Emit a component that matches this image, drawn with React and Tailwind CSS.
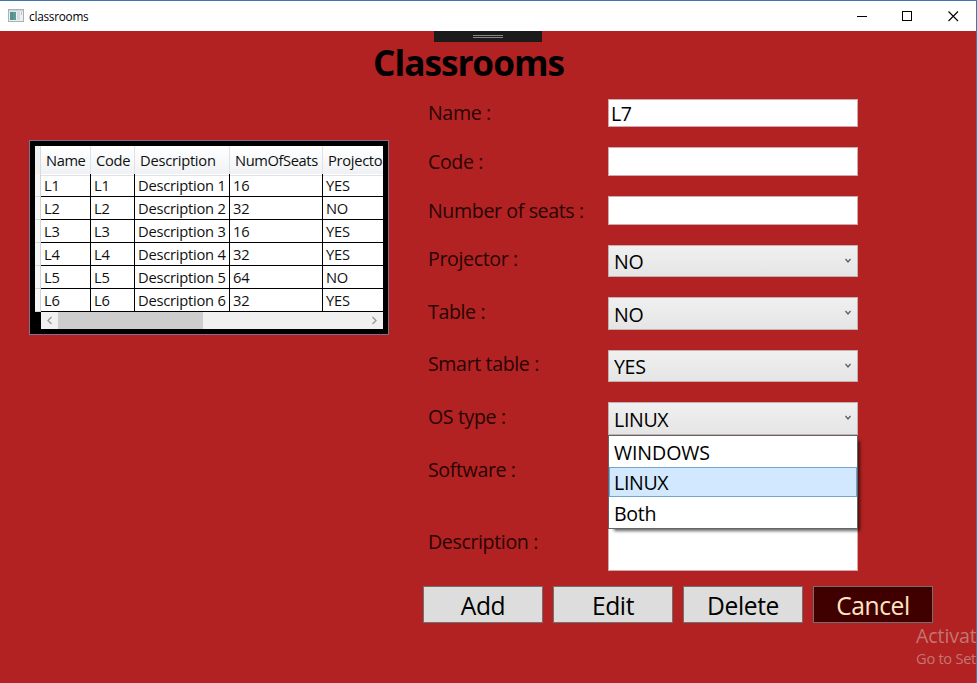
const rooms = [
  ["L1", "L1", "Description 1", "16", "YES"],
  ["L2", "L2", "Description 2", "32", "NO"],
  ["L3", "L3", "Description 3", "16", "YES"],
  ["L4", "L4", "Description 4", "32", "YES"],
  ["L5", "L5", "Description 5", "64", "NO"],
  ["L6", "L6", "Description 6", "32", "YES"],
];

const headers = [
  ["Name", "tracking-[-0.4px]"],
  ["Code", "tracking-[-0.3px]"],
  ["Description", "tracking-[-0.25px]"],
  ["NumOfSeats", "tracking-[-0.4px]"],
  ["Projector", "tracking-[-0.3px]"],
];

const columns = "grid grid-cols-[6px_50px_44px_95px_93px_90px]";

function TitleBar() {
  return (
    <header className="flex h-[31px] shrink-0 items-center border-t border-[#3f76b0] bg-white">
      <svg className="ml-2 h-[14px] w-[16px]" viewBox="0 0 16 14">
        <rect x="0.5" y="0.5" width="15" height="12" fill="#eef1f2" stroke="#a9b0b5" />
        <rect x="1" y="1" width="14" height="1.5" fill="#cfd5d9" />
        <rect x="2" y="3" width="6" height="8" fill="#5b9c93" />
        <rect x="2" y="3" width="3" height="8" fill="#4d8a92" opacity="0.6" />
        <rect x="9" y="3" width="3" height="8" fill="#d5dde0" />
        <rect x="13" y="3" width="1" height="3" fill="#b9c1c6" />
      </svg>
      <span className="ml-[5px] flex-1 pb-px text-[11.8px] leading-5 tracking-[-0.25px]">classrooms</span>
      <div className="mr-[17px] flex items-center gap-[35px]">
        <svg className="h-[11px] w-[11px]" viewBox="0 0 11 11" shapeRendering="crispEdges">
          <rect x="1" y="5" width="10" height="1" fill="#000" />
        </svg>
        <svg className="h-[11px] w-[11px]" viewBox="0 0 11 11" shapeRendering="crispEdges">
          <rect x="0.5" y="0.5" width="9" height="9" fill="none" stroke="#000" />
        </svg>
        <svg className="h-[11px] w-[11px]" viewBox="0 0 11 11">
          <path d="M0.5 0.5 L10 10 M10 0.5 L0.5 10" stroke="#000" strokeWidth="1.1" />
        </svg>
      </div>
    </header>
  );
}

function RoomTable() {
  return (
    <section className="h-[195px] w-[360px] border border-[#80708a] bg-black p-[5px]">
      <div className="w-[348px] overflow-hidden text-[14.7px] text-[#101010]">
        <div className={`${columns} h-[28px] w-[378px] bg-linear-to-b from-white via-[#f8f9fb] to-[#eff1f4]`}>
          <div className="border-r border-b border-[#d8dadc] bg-[#f0f0f0]" />
          {headers.map(([name, tracking]) => (
            <div key={name} className={`border-r border-b border-[#dfe1e4] pl-[5px] leading-[29px] whitespace-nowrap ${tracking}`}>
              {name}
            </div>
          ))}
        </div>
        {rooms.map((room) => (
          <div key={room[0]} className={`${columns} h-[23px] w-[378px] bg-white`}>
            <div className="border-r border-b border-[#d4d4d4] bg-[#f5f5f5]" />
            {room.map((cell, i) => (
              <div key={i} className="border-r border-b border-black pl-[3px] leading-[22px] tracking-[-0.23px] whitespace-nowrap">
                {cell}
              </div>
            ))}
          </div>
        ))}
      </div>
      <div className="ml-[6px] flex h-[17px] w-[342px] items-center justify-between bg-[#f0f0f0]">
        <svg className="h-[17px] w-[17px]" viewBox="0 0 17 17">
          <path d="M10.5 5 L7 8.5 L10.5 12" fill="none" stroke="#9a9a9a" strokeWidth="1.4" />
        </svg>
        <div className="mr-auto h-[17px] w-[145px] bg-[#cdcdcd]" />
        <svg className="h-[17px] w-[17px]" viewBox="0 0 17 17">
          <path d="M6.5 5 L10 8.5 L6.5 12" fill="none" stroke="#9a9a9a" strokeWidth="1.4" />
        </svg>
      </div>
    </section>
  );
}

function Row({ label, height, children }) {
  return (
    <div className={`flex items-start ${height}`}>
      <span className="w-[180px] text-[19.6px] leading-[30px] tracking-[-0.38px] whitespace-nowrap text-[#280404]">{label}</span>
      {children}
    </div>
  );
}

function Input({ className, children }) {
  return (
    <div className={`w-[250px] border border-[#cfa9ab] bg-white pl-[2px] text-[19.6px] tracking-[-0.6px] ${className}`}>{children}</div>
  );
}

function Select({ className, value, children }) {
  return (
    <div
      className={`relative flex w-[250px] justify-between border border-[#c3b0b1] bg-linear-to-b from-[#f0f0f0] to-[#e5e5e5] pl-[5px] text-[19.6px] tracking-[-0.35px] ${className}`}
    >
      <span>{value}</span>
      <svg className="mt-[12px] mr-[6px] h-[7px] w-[6px]" viewBox="0 0 6 7">
        <path d="M0.5 1 L3 4 L5.5 1" fill="none" stroke="#606060" strokeWidth="1.3" />
      </svg>
      {children}
    </div>
  );
}

function OsMenu() {
  return (
    <div className="absolute top-[32px] left-[-1px] z-10 h-[94px] w-[250px] border border-[#646464] bg-white py-px leading-[29px] shadow-[4px_4px_3px_-2px_rgba(0,0,0,0.6)]">
      <div className="h-[30px] pl-[5px] leading-[32px] tracking-[-0.1px]">WINDOWS</div>
      <div className="h-[30px] border border-[#70a5d3] bg-[#d1e8ff] pl-[4px]">LINUX</div>
      <div className="h-[30px] pt-[2px] pl-[5px]">Both</div>
    </div>
  );
}

function Button({ className = "border-[#707070] bg-[#dddddd] text-black", children }) {
  return (
    <button className={`h-[37px] w-[120px] border pt-px text-[24.6px] leading-[36px] tracking-[-0.4px] ${className}`}>{children}</button>
  );
}

export default function App() {
  return (
    <div className="relative flex h-[683px] w-[977px] flex-col overflow-hidden border-r border-[#3f76b0] bg-[#b22222] font-['Open_Sans','Noto_Sans',sans-serif] text-black">
      <TitleBar />
      <div className="ml-[434px] flex h-[11px] w-[108px] shrink-0 items-center justify-center bg-[#1b1b1c]">
        <div className="h-[3px] w-[30px] border-y border-[#868686]" />
      </div>
      <h1 className="ml-[373px] h-[56px] text-[35.2px] leading-[41px] font-bold tracking-[-1px]">Classrooms</h1>
      <div className="flex">
        <div className="mt-[42px] ml-[29px] w-[394px]">
          <RoomTable />
        </div>
        <main>
          <div className="pl-[5px]">
            <Row label="Name :" height="h-[49px]">
              <Input className="mt-px h-[28px] leading-[27px]">L7</Input>
            </Row>
            <Row label="Code :" height="h-[49px]">
              <Input className="h-[29px]" />
            </Row>
            <Row label="Number of seats :" height="h-[48px]">
              <Input className="h-[29px]" />
            </Row>
            <Row label="Projector :" height="h-[53px]">
              <Select className="mt-px h-[32px] leading-[32px]" value="NO" />
            </Row>
            <Row label="Table :" height="h-[52px]">
              <Select className="h-[33px] leading-[34px]" value="NO" />
            </Row>
            <Row label="Smart table :" height="h-[53px]">
              <Select className="mt-px h-[32px] leading-[32px]" value="YES" />
            </Row>
            <Row label="OS type :" height="h-[53px]">
              <Select className="h-[33px] leading-[34px]" value="LINUX">
                <OsMenu />
              </Select>
            </Row>
            <Row label="Software :" height="h-[72px]" />
            <Row label="Description :" height="h-[59px]">
              <Input className="h-[44px]" />
            </Row>
          </div>
          <div className="flex gap-[10px]">
            <Button>Add</Button>
            <Button>Edit</Button>
            <Button>Delete</Button>
            <Button className="border-[#707070] bg-[#400000] text-[#ffe4c4]">Cancel</Button>
          </div>
        </main>
      </div>
      <div className="absolute top-[622px] left-[916px] whitespace-nowrap text-[#c27672]">
        <div className="text-[19.6px] leading-[27px] tracking-[-0.1px]">Activate Windows</div>
        <div className="text-[14.7px] leading-[18px] tracking-[-0.3px]">Go to Settings to activate Windows.</div>
      </div>
    </div>
  );
}
